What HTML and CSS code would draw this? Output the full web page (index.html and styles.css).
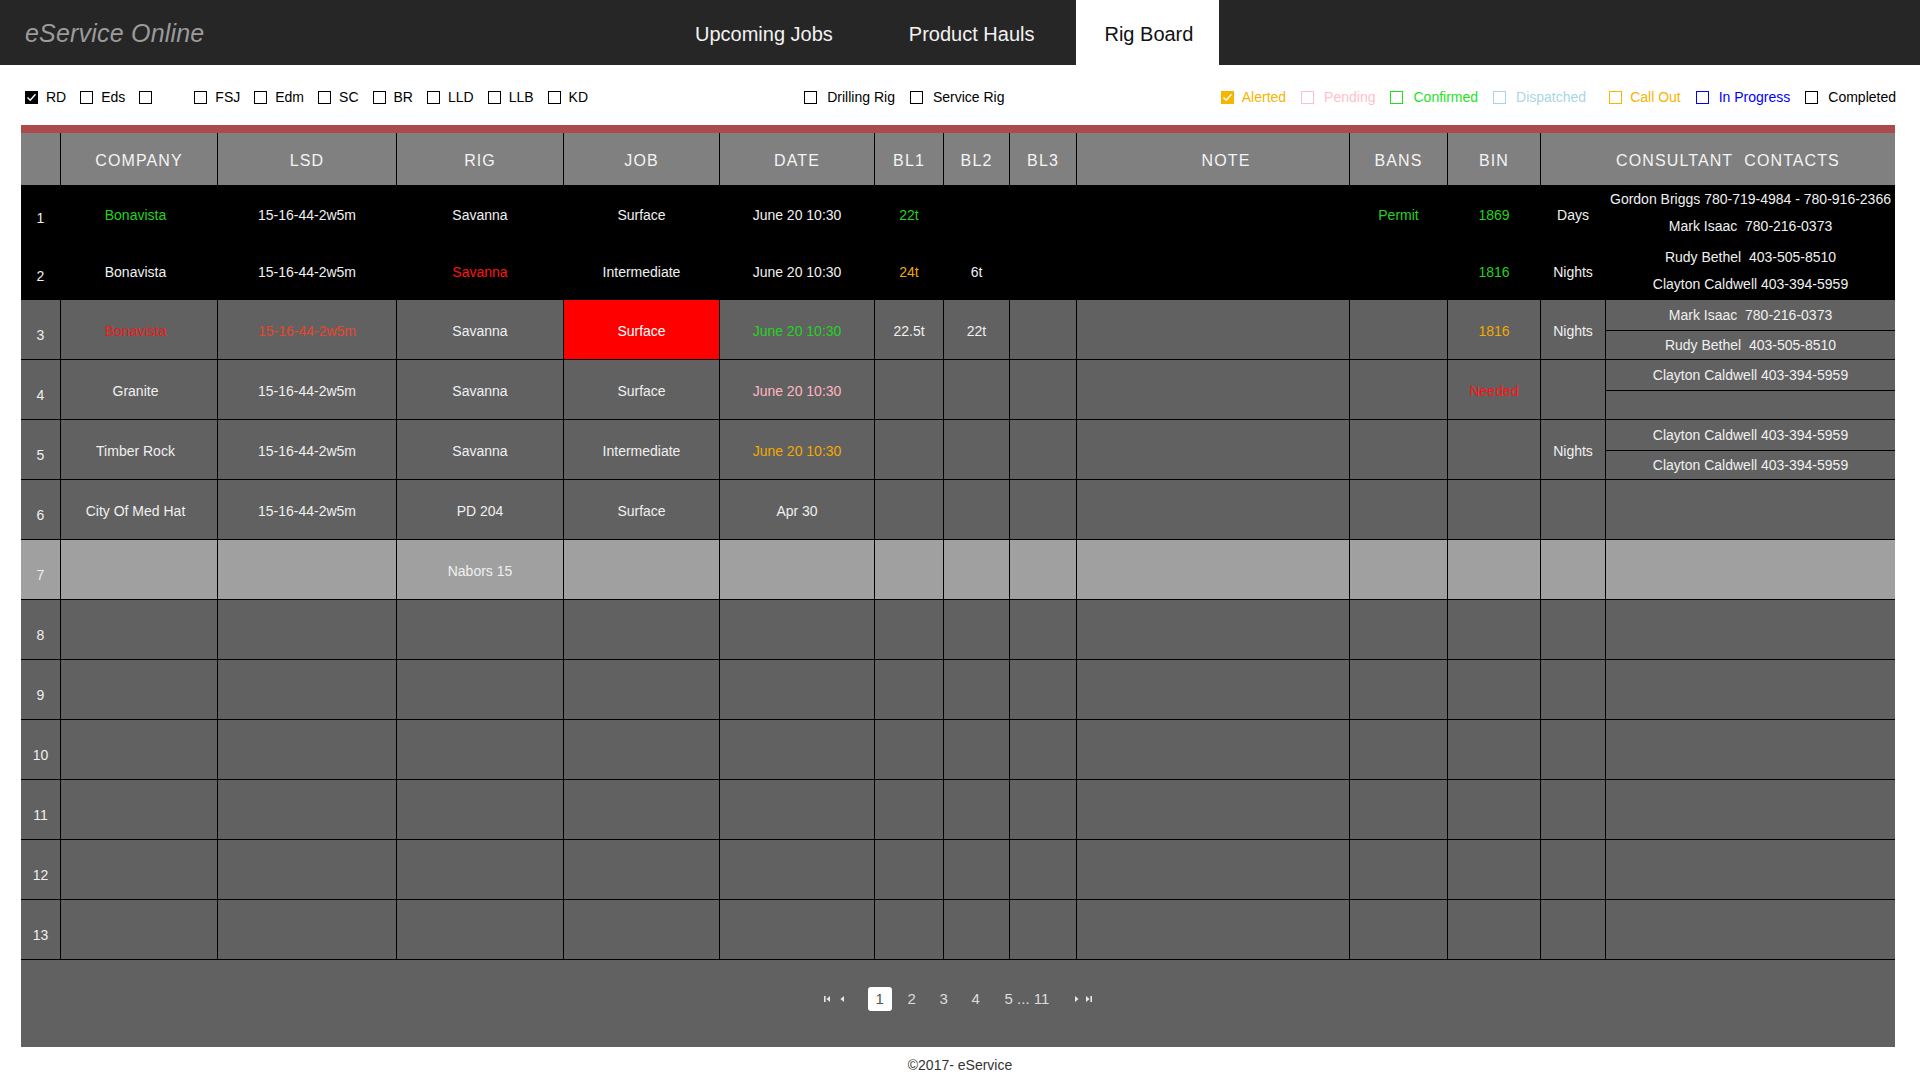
FILE: index.html
```html
<!DOCTYPE html>
<html lang="en">
<head>
<meta charset="utf-8">
<title>eService Online - Rig Board</title>
<link rel="stylesheet" href="styles.css">
</head>
<body>
<header class="topbar">
  <div class="brand">eService Online</div>
  <nav class="nav">
    <div class="nav-item first">Upcoming Jobs</div>
    <div class="nav-item">Product Hauls</div>
    <div class="nav-item active">Rig Board</div>
  </nav>
</header>

<div class="filters">
  <div class="group">
    <label class="item"><span class="cb checked"><svg viewBox="0 0 13 13" width="13" height="13"><polyline points="2.5,6.5 5.2,9.2 10.5,3.2" fill="none" stroke="#fff" stroke-width="1.4"/></svg></span><span class="lbl">RD</span></label>
    <label class="item"><span class="cb"></span><span class="lbl">Eds</span></label>
    <label class="item wide"><span class="cb"></span></label>
    <label class="item"><span class="cb"></span><span class="lbl">FSJ</span></label>
    <label class="item"><span class="cb"></span><span class="lbl">Edm</span></label>
    <label class="item"><span class="cb"></span><span class="lbl">SC</span></label>
    <label class="item"><span class="cb"></span><span class="lbl">BR</span></label>
    <label class="item"><span class="cb"></span><span class="lbl">LLD</span></label>
    <label class="item"><span class="cb"></span><span class="lbl">LLB</span></label>
    <label class="item"><span class="cb"></span><span class="lbl">KD</span></label>
  </div>
  <div class="group mid">
    <label class="item"><span class="cb"></span><span class="lbl">Drilling Rig</span></label>
    <label class="item"><span class="cb"></span><span class="lbl">Service Rig</span></label>
  </div>
  <div class="group legend">
    <label class="item c-alert"><span class="cb checked"><svg viewBox="0 0 13 13" width="13" height="13"><polyline points="2.5,6.5 5.2,9.2 10.5,3.2" fill="none" stroke="#fff" stroke-width="1.4"/></svg></span><span class="lbl">Alerted</span></label>
    <label class="item c-pend"><span class="cb"></span><span class="lbl">Pending</span></label>
    <label class="item c-conf"><span class="cb"></span><span class="lbl">Confirmed</span></label>
    <label class="item c-disp"><span class="cb"></span><span class="lbl">Dispatched</span></label>
    <label class="item c-call"><span class="cb"></span><span class="lbl">Call Out</span></label>
    <label class="item c-prog"><span class="cb"></span><span class="lbl">In Progress</span></label>
    <label class="item c-done"><span class="cb"></span><span class="lbl">Completed</span></label>
  </div>
</div>

<div class="redbar"></div>

<main class="board">
  <div class="row head">
    <div class="c"></div>
    <div class="c">COMPANY</div>
    <div class="c">LSD</div>
    <div class="c">RIG</div>
    <div class="c">JOB</div>
    <div class="c">DATE</div>
    <div class="c">BL1</div>
    <div class="c">BL2</div>
    <div class="c">BL3</div>
    <div class="c note-h">NOTE</div>
    <div class="c">BANS</div>
    <div class="c">BIN</div>
    <div class="c contacts-h">CONSULTANT&nbsp; CONTACTS</div>
  </div>

  <div class="row dark r1">
    <div class="c num">1</div>
    <div class="c co g">Bonavista</div>
    <div class="c">15-16-44-2w5m</div>
    <div class="c">Savanna</div>
    <div class="c">Surface</div>
    <div class="c">June 20 10:30</div>
    <div class="c g">22t</div>
    <div class="c"></div>
    <div class="c"></div>
    <div class="c"></div>
    <div class="c g">Permit</div>
    <div class="c g">1869</div>
    <div class="c">Days</div>
    <div class="c lines"><div>Gordon Briggs 780-719-4984 - 780-916-2366</div><div>Mark Isaac&nbsp; 780-216-0373</div></div>
  </div>

  <div class="row dark r2">
    <div class="c num">2</div>
    <div class="c co">Bonavista</div>
    <div class="c">15-16-44-2w5m</div>
    <div class="c r">Savanna</div>
    <div class="c">Intermediate</div>
    <div class="c">June 20 10:30</div>
    <div class="c o">24t</div>
    <div class="c">6t</div>
    <div class="c"></div>
    <div class="c"></div>
    <div class="c"></div>
    <div class="c g">1816</div>
    <div class="c">Nights</div>
    <div class="c lines"><div>Rudy Bethel&nbsp; 403-505-8510</div><div>Clayton Caldwell 403-394-5959</div></div>
  </div>

  <div class="row">
    <div class="c num">3</div>
    <div class="c co r">Bonavista</div>
    <div class="c ro">15-16-44-2w5m</div>
    <div class="c">Savanna</div>
    <div class="c redcell">Surface</div>
    <div class="c g">June 20 10:30</div>
    <div class="c">22.5t</div>
    <div class="c">22t</div>
    <div class="c"></div>
    <div class="c"></div>
    <div class="c"></div>
    <div class="c o">1816</div>
    <div class="c">Nights</div>
    <div class="c subs"><div class="sub">Mark Isaac&nbsp; 780-216-0373</div><div class="sub">Rudy Bethel&nbsp; 403-505-8510</div></div>
  </div>

  <div class="row">
    <div class="c num">4</div>
    <div class="c co">Granite</div>
    <div class="c">15-16-44-2w5m</div>
    <div class="c">Savanna</div>
    <div class="c">Surface</div>
    <div class="c p">June 20 10:30</div>
    <div class="c"></div>
    <div class="c"></div>
    <div class="c"></div>
    <div class="c"></div>
    <div class="c"></div>
    <div class="c r">Needed</div>
    <div class="c"></div>
    <div class="c subs"><div class="sub">Clayton Caldwell 403-394-5959</div><div class="sub"></div></div>
  </div>

  <div class="row">
    <div class="c num">5</div>
    <div class="c co">Timber Rock</div>
    <div class="c">15-16-44-2w5m</div>
    <div class="c">Savanna</div>
    <div class="c">Intermediate</div>
    <div class="c o">June 20 10:30</div>
    <div class="c"></div>
    <div class="c"></div>
    <div class="c"></div>
    <div class="c"></div>
    <div class="c"></div>
    <div class="c"></div>
    <div class="c">Nights</div>
    <div class="c subs"><div class="sub">Clayton Caldwell 403-394-5959</div><div class="sub">Clayton Caldwell 403-394-5959</div></div>
  </div>

  <div class="row">
    <div class="c num">6</div>
    <div class="c co">City Of Med Hat</div>
    <div class="c">15-16-44-2w5m</div>
    <div class="c">PD 204</div>
    <div class="c">Surface</div>
    <div class="c">Apr 30</div>
    <div class="c"></div>
    <div class="c"></div>
    <div class="c"></div>
    <div class="c"></div>
    <div class="c"></div>
    <div class="c"></div>
    <div class="c"></div>
    <div class="c"></div>
  </div>

  <div class="row light">
    <div class="c num">7</div>
    <div class="c"></div>
    <div class="c"></div>
    <div class="c">Nabors 15</div>
    <div class="c"></div>
    <div class="c"></div>
    <div class="c"></div>
    <div class="c"></div>
    <div class="c"></div>
    <div class="c"></div>
    <div class="c"></div>
    <div class="c"></div>
    <div class="c"></div>
    <div class="c"></div>
  </div>

  <div class="row"><div class="c num">8</div><div class="c"></div><div class="c"></div><div class="c"></div><div class="c"></div><div class="c"></div><div class="c"></div><div class="c"></div><div class="c"></div><div class="c"></div><div class="c"></div><div class="c"></div><div class="c"></div><div class="c"></div></div>
  <div class="row"><div class="c num">9</div><div class="c"></div><div class="c"></div><div class="c"></div><div class="c"></div><div class="c"></div><div class="c"></div><div class="c"></div><div class="c"></div><div class="c"></div><div class="c"></div><div class="c"></div><div class="c"></div><div class="c"></div></div>
  <div class="row"><div class="c num">10</div><div class="c"></div><div class="c"></div><div class="c"></div><div class="c"></div><div class="c"></div><div class="c"></div><div class="c"></div><div class="c"></div><div class="c"></div><div class="c"></div><div class="c"></div><div class="c"></div><div class="c"></div></div>
  <div class="row"><div class="c num">11</div><div class="c"></div><div class="c"></div><div class="c"></div><div class="c"></div><div class="c"></div><div class="c"></div><div class="c"></div><div class="c"></div><div class="c"></div><div class="c"></div><div class="c"></div><div class="c"></div><div class="c"></div></div>
  <div class="row"><div class="c num">12</div><div class="c"></div><div class="c"></div><div class="c"></div><div class="c"></div><div class="c"></div><div class="c"></div><div class="c"></div><div class="c"></div><div class="c"></div><div class="c"></div><div class="c"></div><div class="c"></div><div class="c"></div></div>
  <div class="row"><div class="c num">13</div><div class="c"></div><div class="c"></div><div class="c"></div><div class="c"></div><div class="c"></div><div class="c"></div><div class="c"></div><div class="c"></div><div class="c"></div><div class="c"></div><div class="c"></div><div class="c"></div><div class="c"></div></div>

  <div class="pager">
    <span class="ico first"><svg width="6" height="6" viewBox="0 0 6 6"><rect x="0" y="0" width="1.6" height="6" fill="#e6e6e6"/><polygon points="6,0 2.4,3 6,6" fill="#e6e6e6"/></svg></span>
    <span class="ico prev"><svg width="4" height="6" viewBox="0 0 4 6"><polygon points="4,0 0.4,3 4,6" fill="#e6e6e6"/></svg></span>
    <span class="pg active">1</span>
    <span class="pg">2</span>
    <span class="pg">3</span>
    <span class="pg">4</span>
    <span class="pg more">5 ... 11</span>
    <span class="ico next"><svg width="4" height="6" viewBox="0 0 4 6"><polygon points="0,0 3.6,3 0,6" fill="#e6e6e6"/></svg></span>
    <span class="ico last"><svg width="6" height="6" viewBox="0 0 6 6"><polygon points="0,0 3.6,3 0,6" fill="#e6e6e6"/><rect x="4.4" y="0" width="1.6" height="6" fill="#e6e6e6"/></svg></span>
  </div>
</main>

<footer class="footer">©2017- eService</footer>
</body>
</html>
```

FILE: styles.css
```css
html, body {
  margin: 0;
  padding: 0;
}

body {
  font-family: "Liberation Sans", Arial, sans-serif;
  background: #ffffff;
  color: #000;
}

/* ---------- top bar ---------- */
.topbar {
  display: flex;
  height: 65px;
  background: #262626;
  padding-left: 25px;
}

.brand {
  width: 642px;
  flex: 0 0 642px;
  font-style: italic;
  font-size: 25px;
  letter-spacing: 0.2px;
  line-height: 67px;
  color: #9b9b9b;
}

.nav {
  display: flex;
  gap: 16px;
}

.nav-item {
  padding: 0 28px;
  line-height: 68px;
  font-size: 20px;
  color: #f2f2f2;
}

.nav-item.first {
  margin-right: 4px;
}

.nav-item.active {
  background: #ffffff;
  color: #111111;
  padding: 0 26px 0 28px;
  margin-left: -2px;
}

/* ---------- filters ---------- */
.filters {
  height: 60px;
  box-sizing: border-box;
  padding: 4px 24px 0 25px;
  display: flex;
  align-items: center;
  justify-content: space-between;
  font-size: 14px;
}

.group {
  display: flex;
  align-items: center;
  gap: 14px;
}

.group.mid {
  gap: 15px;
}

.group.legend {
  gap: 15px;
}

.item {
  display: flex;
  align-items: center;
  gap: 8px;
  line-height: 16px;
}

.group.mid .item {
  gap: 10px;
}

.group.legend .item {
  gap: 10px;
}

.group.legend .c-alert,
.group.legend .c-call {
  gap: 8px;
}

.item.wide {
  margin-right: 28px;
}

.cb {
  display: block;
  width: 13px;
  height: 13px;
  box-sizing: border-box;
  border: 1px solid #000;
  background: #fff;
  position: relative;
}

.cb svg {
  position: absolute;
  left: -1px;
  top: -1px;
}

.cb.checked {
  background: #000;
}

.c-alert { color: #f7b400; }
.c-alert .cb { border-color: #f7b400; background: #f7b400; }
.c-pend { color: #ffbfca; }
.c-pend .cb { border-color: #ffbfca; }
.c-conf { color: #1fe21f; }
.c-conf .cb { border-color: #1fe21f; }
.c-disp { color: #a9d6e5; margin-right: 8px; }
.c-disp .cb { border-color: #a9d6e5; }
.c-call { color: #f7b400; }
.c-call .cb { border-color: #f7b400; }
.c-prog { color: #0000ff; }
.c-prog .cb { border-color: #0000ff; }
.c-done { color: #000; }
.c-done .cb { border-color: #000; }

/* ---------- red bar ---------- */
.redbar {
  height: 8px;
  background: #ab4b4b;
  margin: 0 25px 0 21px;
}

/* ---------- board ---------- */
.board {
  margin: 0 25px 0 21px;
  background: #616161;
  color: #f0f0f0;
  font-size: 14px;
}

.row {
  display: grid;
  grid-template-columns: 39px 157px 179px 167px 156px 155px 69px 66px 67px 273px 98px 93px 65px 290px;
  height: 60px;
  box-sizing: border-box;
  border-bottom: 1px solid #000;
  background: #616161;
}

.c {
  display: flex;
  align-items: center;
  justify-content: center;
  text-align: center;
  white-space: nowrap;
  border-left: 1px solid #000;
  box-sizing: border-box;
  min-width: 0;
  padding-top: 3px;
}

.c:first-child {
  border-left: none;
}

.row.head {
  height: 52px;
  background: #808080;
  border-bottom: none;
  font-size: 16px;
  letter-spacing: 1.1px;
  color: #f4f4f4;
}

.row.head .c {
  padding-top: 4px;
}

.row.head .contacts-h {
  grid-column: span 2;
  padding-left: 20px;
}

.row.head .note-h {
  padding-left: 26px;
}

.row.dark {
  background: #000;
}

.row.r1 {
  height: 57px;
}

.row.r2 {
  height: 58px;
}

.row.light {
  background: #a0a0a0;
}

.row .num {
  padding-top: 10px;
}

.co {
  padding-right: 7px;
}

.row .lines {
  flex-direction: column;
  line-height: 27px;
  padding-top: 0;
}

.row .subs {
  flex-direction: column;
  align-items: stretch;
  justify-content: flex-start;
  padding-top: 0;
}

.sub {
  height: 31px;
  line-height: 30px;
  box-sizing: border-box;
  border-bottom: 1px solid #000;
  text-align: center;
}

.sub + .sub {
  height: auto;
  flex: 1;
  border-bottom: none;
  line-height: 28px;
}

.g { color: #22d422; }
.r { color: #ff1414; }
.ro { color: #e8452c; }
.o { color: #f2a900; }
.p { color: #ffb6c1; }
.row .co.r { color: #ea1c1c; }

.redcell {
  background: #ff0000;
  color: #ffffff;
}

/* ---------- pager ---------- */
.pager {
  height: 87px;
  box-sizing: border-box;
  padding-bottom: 9px;
  display: flex;
  align-items: center;
  justify-content: center;
}

.ico {
  display: flex;
  align-items: center;
}

.ico.prev { margin-left: 10px; }
.ico.next { margin-left: 26px; }
.ico.last { margin-left: 7px; }

.pg {
  width: 24px;
  height: 24px;
  line-height: 24px;
  text-align: center;
  font-size: 15px;
  color: #dddddd;
  border-radius: 3px;
  margin-left: 8px;
}

.pg.active {
  background: #ffffff;
  color: #555555;
  margin-left: 24px;
}

.pg.more {
  width: auto;
  margin-left: 17px;
}

/* ---------- footer ---------- */
.footer {
  text-align: center;
  font-size: 14px;
  color: #333333;
  line-height: 20px;
  padding-top: 8px;
}
```
